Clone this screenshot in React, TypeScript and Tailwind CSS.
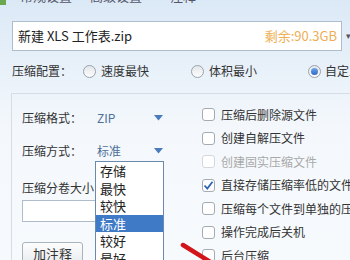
import { ReactNode } from 'react';

const font = { fontFamily: '"Microsoft YaHei", "Noto Sans CJK SC", "Liberation Sans", sans-serif' };

const Radio = ({ checked }: { checked?: boolean }) => (
  <span className="flex h-[13px] w-[13px] shrink-0 items-center justify-center rounded-full border border-[#9aa3ad] bg-gradient-to-b from-[#e4e7ea] to-[#fbfcfd]">
    {checked && <span className="h-[7px] w-[7px] rounded-full bg-gradient-to-b from-[#6fa3e8] to-[#2f6bc4]" />}
  </span>
);

const Check = ({ checked, disabled }: { checked?: boolean; disabled?: boolean }) => (
  <span
    className={`flex h-[13px] w-[13px] shrink-0 items-center justify-center rounded-[3px] border bg-white ${
      disabled ? 'border-[#d4d8dc]' : 'border-[#a4abb3]'
    }`}
  >
    {checked && (
      <svg width="11" height="11" viewBox="0 0 11 11">
        <path d="M1.5 5.5 L4.3 8.5 L9.5 1.8" fill="none" stroke="#2d64b3" strokeWidth="1.8" />
      </svg>
    )}
  </span>
);

const Arrow = () => (
  <svg width="9" height="6" viewBox="0 0 9 6">
    <path d="M0 0 H9 L4.5 5.5 Z" fill="#4a7bbd" />
  </svg>
);

const CheckRow = ({ children, checked, disabled }: { children: ReactNode; checked?: boolean; disabled?: boolean }) => (
  <div className="flex h-[23.5px] items-center gap-[6px] whitespace-nowrap">
    <Check checked={checked} disabled={disabled} />
    <span className={disabled ? 'text-[#a8a8a8]' : 'text-[#333]'}>{children}</span>
  </div>
);

const App = () => {
  const levels = ['存储', '最快', '较快', '标准', '较好', '最好'];

  return (
    <div
      style={font}
      className="relative h-[260px] w-[350px] overflow-hidden bg-gradient-to-b from-[#dbe9f6] via-[#f4f8fc] to-[#f7fafd] text-[12px] text-[#333]"
    >
      <div className="relative h-[21px]">
        <span className="absolute left-0 top-0 h-[5px] w-[6px] bg-[#6aa84f]" />
        <div className="absolute left-[20px] top-[-14px] flex gap-[18px] text-[13px] text-[#556]">
          <span>常规设置</span>
          <span>高级设置</span>
          <span className="ml-[10px]">注释</span>
        </div>
      </div>

      <div className="flex items-center">
        <div className="ml-[12px] flex h-[30px] w-[330px] shrink-0 items-center justify-between border border-[#aebccb] bg-white pl-[5px] pr-[4px]">
          <span className="text-[13px] text-[#222]">新建 XLS 工作表.zip</span>
          <span className="text-[13px] text-[#eeae52]">剩余:90.3GB</span>
        </div>
        <span className="ml-[4px] text-[9px] text-[#555]">▾</span>
      </div>

      <div className="mt-[11px] flex h-[18px] items-center pl-[12px] whitespace-nowrap">
        <span className="w-[71px] shrink-0">压缩配置：</span>
        <Radio />
        <span className="ml-[5px] w-[90px] shrink-0">速度最快</span>
        <Radio />
        <span className="ml-[5px] w-[99px] shrink-0">体积最小</span>
        <Radio checked />
        <span className="ml-[4px] shrink-0">自定义</span>
      </div>

      <div className="ml-[11px] mt-[13px] flex h-[200px] border-l border-t border-[#d6dde4]">
        <div className="relative w-[190px] shrink-0 pl-[10px] pt-[15px]">
          <div className="flex h-[18px] items-center">
            <span className="w-[75px]">压缩格式：</span>
            <span className="w-[57px] text-[#4d6f99]">ZIP</span>
            <Arrow />
          </div>
          <div className="mt-[15px] flex h-[18px] items-center">
            <span className="w-[75px]">压缩方式：</span>
            <span className="w-[57px] text-[#4d6f99]">标准</span>
            <Arrow />
          </div>
          <div className="mt-[19px] flex h-[18px] items-center whitespace-nowrap">压缩分卷大小</div>
          <div className="mt-[3px] h-[22px] w-[90px] border border-[#aebccb] bg-white" />
          <button className="mt-[20px] h-[24px] w-[61px] rounded-[3px] border border-[#a9b3bd] bg-gradient-to-b from-[#fdfdfd] to-[#e6eaee] text-[13px] text-[#333]">
            加注释
          </button>

          <div className="absolute left-[83px] top-[67px] w-[69px] border border-[#6b88ad] bg-white">
            {levels.map((l) => (
              <div
                key={l}
                className={`flex h-[17.5px] items-center pl-[4px] text-[13px] ${
                  l === '标准' ? 'bg-[#3f7ac6] text-white' : 'text-[#222]'
                }`}
              >
                {l}
              </div>
            ))}
          </div>
        </div>

        <div className="pt-[9px]">
          <CheckRow>压缩后删除源文件</CheckRow>
          <CheckRow>创建自解压文件</CheckRow>
          <CheckRow disabled>创建固实压缩文件</CheckRow>
          <CheckRow checked>直接存储压缩率低的文件</CheckRow>
          <CheckRow>压缩每个文件到单独的压缩包</CheckRow>
          <CheckRow>操作完成后关机</CheckRow>
          <CheckRow>后台压缩</CheckRow>
        </div>
      </div>

      <svg className="absolute left-[180px] top-[240px]" width="40" height="24" viewBox="0 0 40 24">
        <path d="M3 5 L32 23" stroke="#d2141b" strokeWidth="4.5" strokeLinecap="round" />
      </svg>
    </div>
  );
};

export default App;
